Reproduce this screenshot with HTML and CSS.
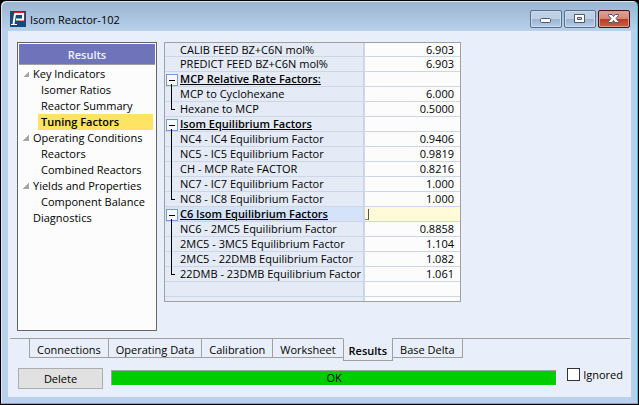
FILE: index.html
```html
<!DOCTYPE html>
<html lang="en">
<head>
<meta charset="utf-8">
<title>Isom Reactor-102</title>
<link rel="stylesheet" href="styles.css">
</head>
<body>
<div class="window">
  <header class="titlebar">
    <svg class="logo" viewBox="0 0 16 16" aria-hidden="true">
      <rect width="16" height="16" fill="#14487f"/>
      <path d="M4 1.500h10v8H9" fill="none" stroke="#e02430" stroke-width="1"/>
      <path d="M4.500 3h8.500v5.500H6" fill="none" stroke="#fff" stroke-width="2"/>
      <path d="M5 3L3.500 13" fill="none" stroke="#fff" stroke-width="2"/>
      <path d="M1 13.500h6" fill="none" stroke="#fff" stroke-width="1"/>
    </svg>
    <h1 class="title">Isom Reactor-102</h1>
    <div class="controls">
      <button class="control" aria-label="Minimize"><svg viewBox="0 0 30 16"><rect x="9.500" y="7.500" width="10" height="4" rx="1" fill="#fff" stroke="#535666"/></svg></button>
      <button class="control" aria-label="Maximize"><svg viewBox="0 0 30 16"><path fill-rule="evenodd" d="M9.500 3.500h10v8h-10zM12.500 6.500v2h4v-2z" fill="#fff" stroke="#535666"/></svg></button>
      <button class="control close" aria-label="Close"><svg viewBox="0 0 30 16"><path d="M9.500 3.500h3.500l1.500 2 1.500-2h3.500v1l-2.500 3 2.500 3v1H16l-1.500-2-1.500 2H9.500v-1l2.500-3-2.500-3z" fill="#fff" stroke="#535666"/></svg></button>
    </div>
  </header>
  <main class="client">
    <div class="content">
      <nav class="sidebar" aria-label="Results">
        <h2 class="sidebar-title">Results</h2>
        <ul class="tree">
          <li class="branch">Key Indicators
            <ul><li>Isomer Ratios</li><li>Reactor Summary</li><li class="selected">Tuning Factors</li></ul>
          </li>
          <li class="branch">Operating Conditions
            <ul><li>Reactors</li><li>Combined Reactors</li></ul>
          </li>
          <li class="branch">Yields and Properties
            <ul><li>Component Balance</li></ul>
          </li>
          <li>Diagnostics</li>
        </ul>
      </nav>
      <div class="grid">
        <table class="factors">
          <tr><th>CALIB FEED BZ+C6N mol%</th><td>6.903</td></tr>
          <tr><th>PREDICT FEED BZ+C6N mol%</th><td>6.903</td></tr>
          <tr class="group"><th>MCP Relative Rate Factors:</th><td></td></tr>
          <tr class="child"><th>MCP to Cyclohexane</th><td>6.000</td></tr>
          <tr class="child last"><th>Hexane to MCP</th><td>0.5000</td></tr>
          <tr class="group"><th>Isom Equilibrium Factors</th><td></td></tr>
          <tr class="child"><th>NC4 - IC4 Equilibrium Factor</th><td>0.9406</td></tr>
          <tr class="child"><th>NC5 - IC5 Equilibrium Factor</th><td>0.9819</td></tr>
          <tr class="child"><th>CH - MCP Rate FACTOR</th><td>0.8216</td></tr>
          <tr class="child"><th>NC7 - IC7 Equilibrium Factor</th><td>1.000</td></tr>
          <tr class="child last"><th>NC8 - IC8 Equilibrium Factor</th><td>1.000</td></tr>
          <tr class="group active"><th>C6 Isom Equilibrium Factors</th><td><span class="caret"></span></td></tr>
          <tr class="child"><th>NC6 - 2MC5 Equilibrium Factor</th><td>0.8858</td></tr>
          <tr class="child"><th>2MC5 - 3MC5 Equilibrium Factor</th><td>1.104</td></tr>
          <tr class="child"><th>2MC5 - 22DMB Equilibrium Factor</th><td>1.082</td></tr>
          <tr class="child last"><th>22DMB - 23DMB Equilibrium Factor</th><td>1.061</td></tr>
          <tr><th></th><td></td></tr>
          <tr class="tail"><th></th><td></td></tr>
        </table>
      </div>
    </div>
    <div class="tabs" role="tablist">
      <button class="tab" role="tab">Connections</button>
      <button class="tab" role="tab">Operating Data</button>
      <button class="tab" role="tab">Calibration</button>
      <button class="tab" role="tab">Worksheet</button>
      <button class="tab current" role="tab" aria-selected="true">Results</button>
      <button class="tab" role="tab">Base Delta</button>
    </div>
    <footer class="footer">
      <button class="delete">Delete</button>
      <div class="status" role="status">OK</div>
      <label class="ignored"><input type="checkbox">Ignored</label>
    </footer>
  </main>
</div>
</body>
</html>
```
FILE: styles.css
```css
* { box-sizing: border-box; }

body {
  margin: 0;
  background: #000;
  color: #000;
  font: 11px/16px "Open Sans", "Noto Sans", sans-serif;
}

button { font: inherit; color: inherit; }

h1, h2, ul { margin: 0; padding: 0; font: inherit; list-style: none; }

.window {
  display: flex;
  flex-direction: column;
  min-height: 100vh;
  padding: 0 7px 7px;
  border: 1px solid #000;
  border-radius: 6px 6px 0 0;
  background: linear-gradient(#99b4d1, #b9d1ea 30px);
  box-shadow: inset -1px -1px #32c5e0, inset 1px 1px #dce8f4;
}

.titlebar {
  display: flex;
  align-items: center;
  height: 30px;
  padding: 6px 1px 0 2px;
}

.logo { width: 16px; height: 16px; }

.title { flex: 1; padding: 2px 0 0 4px; }

.controls { display: flex; gap: 2px; }

.control {
  width: 32px;
  height: 18px;
  padding: 0;
  border: 1px solid #5c6f88;
  border-radius: 2px;
  background: linear-gradient(#bdd0e6 50%, #98b3d0 50%, #b5cee8);
  box-shadow: inset 0 0 0 1px #c9dbee;
}

.control svg { display: block; width: 30px; height: 16px; }

.close {
  border-color: #43141a;
  background: linear-gradient(#e3a197, #d38476 50%, #b83a26 50%, #cc6045);
  box-shadow: inset 0 0 0 1px #dd9a8d;
}

.client {
  flex: 1;
  display: flex;
  flex-direction: column;
  background: #e9effa;
}

.content {
  flex: 1;
  display: flex;
  align-items: flex-start;
  gap: 7px;
  padding: 11px 9px 7px;
}

.sidebar {
  align-self: stretch;
  width: 140px;
  border: 1px solid #646464;
  background: #fcfcfc;
  box-shadow: inset 0 0 0 1px #fff;
}

.sidebar-title {
  height: 21px;
  margin: 1px;
  border-bottom: 1px solid #a0a0a0;
  background: #6f74ba;
  color: #eef2fb;
  font-weight: 600;
  line-height: 22px;
  text-align: center;
}

.tree > li { padding-left: 15px; }

.tree ul li { margin-right: 3px; padding-left: 3px; margin-left: 5px; }

.branch::before {
  content: "";
  float: left;
  width: 6px;
  height: 6px;
  margin: 5px 0 0 -10px;
  background: linear-gradient(135deg, transparent 50%, #a6a6a6 50%);
}

.tree .selected { background: #ffe364; font-weight: 600; }

.grid { border: 1px solid #a0a0a0; }

.factors { border-spacing: 0; line-height: 14px; }

.factors tr { height: 15px; }

.factors th,
.factors td { padding: 0; border-bottom: 1px solid #cdd6e6; }

.factors th {
  position: relative;
  width: 200px;
  padding-left: 15px;
  border-right: 2px solid #cdd6e6;
  background: #e4ebf7;
  font-weight: 400;
  text-align: left;
  white-space: nowrap;
}

.factors td {
  width: 95px;
  padding-right: 6px;
  background: #fcfcfc;
  text-align: right;
}

.factors tr:first-child { height: 14px; line-height: 13px; }

.factors .tail { height: 4px; }

.factors .tail > * { border-bottom: 0; }

.factors .group th { font-weight: 600; text-decoration: underline; }

.group th::before {
  content: "";
  position: absolute;
  left: 1px;
  top: 2px;
  width: 10px;
  height: 10px;
  border: 1px solid #7b9bc8;
  background: linear-gradient(#000, #000) center / 6px 1px no-repeat #f4f8fd;
}

.child th::before {
  content: "";
  position: absolute;
  left: 6px;
  top: -3px;
  bottom: -1px;
  width: 3px;
  border-left: 1px solid #000;
}

.child.last th::before { bottom: 6px; border-bottom: 1px solid #000; }

.factors .active th { background: #d4e3fa; }

.factors .active td { background: #fffbd9; }

.caret {
  display: block;
  width: 4px;
  height: 11px;
  border-right: 1px solid #555;
  border-bottom: 1px solid #888;
}

.tabs {
  display: flex;
  align-items: flex-start;
  height: 22px;
  margin: 0 1px 0 2px;
  padding-left: 19px;
  border-top: 1px solid #a0a0a0;
}

.tab {
  height: 20px;
  margin: -1px 0 0 -1px;
  padding: 3px 7px 0;
  border: 1px solid #a0a0a0;
  background: #e9effa;
  line-height: 16px;
}

.tab:first-child { margin-left: 0; }

.tab.current {
  height: 23px;
  padding: 3px 5px 0;
  border-top-color: #e9effa;
  font-weight: 600;
}

.footer {
  display: flex;
  align-items: flex-start;
  gap: 8px;
  padding: 8px 8px 8px 10px;
}

.delete {
  width: 85px;
  height: 21px;
  padding: 0;
  border: 1px solid #adadad;
  background: #e1e1e1;
}

.status {
  flex: 1;
  height: 16px;
  margin-top: 2px;
  border: 1px solid #fff;
  border-top-color: #a0a0a0;
  border-left-color: #a0a0a0;
  background: #00cd00;
  line-height: 14px;
  text-align: center;
}

.ignored {
  display: flex;
  gap: 3px;
  padding-left: 2px;
  line-height: 14px;
}

.ignored input {
  appearance: none;
  width: 13px;
  height: 13px;
  margin: 0;
  border: 1px solid #333;
  background: #fff;
}
```
